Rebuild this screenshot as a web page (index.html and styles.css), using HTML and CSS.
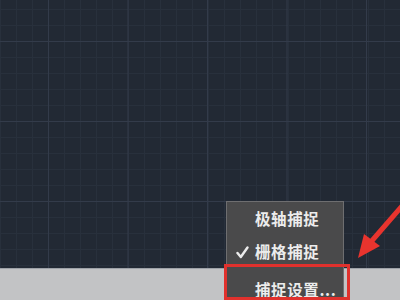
FILE: index.html
```html
<!DOCTYPE html>
<html>
<head>
<meta charset="utf-8">
<link rel="stylesheet" href="styles.css">
</head>
<body>
<div class="screen">
  <div class="canvas"></div>
  <div class="statusbar"></div>
  <div class="menu">
    <div class="item">极轴捕捉</div>
    <div class="item"><svg class="check" width="13" height="13" viewBox="0 0 13 13"><path d="M1.5 7 L4.8 11 L11.5 1.5" fill="none" stroke="#ececec" stroke-width="2.4" stroke-linecap="round" stroke-linejoin="round"/></svg>栅格捕捉</div>
    <div class="item last">捕捉设置...</div>
  </div>
  <div class="highlight"></div>
  <svg class="arrow" width="60" height="70" viewBox="0 0 60 70">
    <line x1="62" y1="5" x2="30" y2="42" stroke="#e8342e" stroke-width="5" stroke-linecap="round"/>
    <polygon points="18,57 24,33 40,45" fill="#e8342e"/>
  </svg>
</div>
</body>
</html>
```
FILE: styles.css
```css
html, body {
  margin: 0;
  padding: 0;
  background: #232a35;
}
.screen {
  position: relative;
  width: 400px;
  height: 300px;
  overflow: hidden;
  display: flex;
  flex-direction: column;
}
.canvas {
  height: 268px;
  background-color: #222934;
  background-image:
    linear-gradient(to right, #333b4a 0, #333b4a 1px, transparent 1px),
    linear-gradient(to bottom, #333b4a 0, #333b4a 1px, transparent 1px),
    linear-gradient(to right, #28303c 0, #28303c 1px, transparent 1px),
    linear-gradient(to bottom, #28303c 0, #28303c 1px, transparent 1px);
  background-size: 79.5px 100%, 100% 80px, 16px 100%, 100% 16px;
  background-position: 48px 0, 0 41px, 0 0, 0 9px;
}
.statusbar {
  flex: 1;
  background: #c2c3c5;
  border-top: 1px solid #9ea2a8;
}
.menu {
  position: absolute;
  left: 226px;
  top: 201px;
  width: 116px;
  height: 110px;
  background: #4a4a4b;
  border: 1px solid #6e6e70;
  font-family: "Noto Sans CJK SC", "Noto Sans", sans-serif;
  font-size: 15.5px;
  font-weight: 700;
  color: #ececec;
}
.item {
  position: relative;
  height: 33px;
  line-height: 33px;
  padding-left: 28px;
  letter-spacing: 0.6px;
}
.item.last {
  margin-top: 3px;
  line-height: 36px;
}
.check {
  position: absolute;
  left: 9px;
  top: 11px;
}
.highlight {
  position: absolute;
  left: 224px;
  top: 264px;
  width: 120px;
  height: 30px;
  border: 3px solid #e0312d;
}
.arrow {
  position: absolute;
  left: 340px;
  top: 201px;
}
```
